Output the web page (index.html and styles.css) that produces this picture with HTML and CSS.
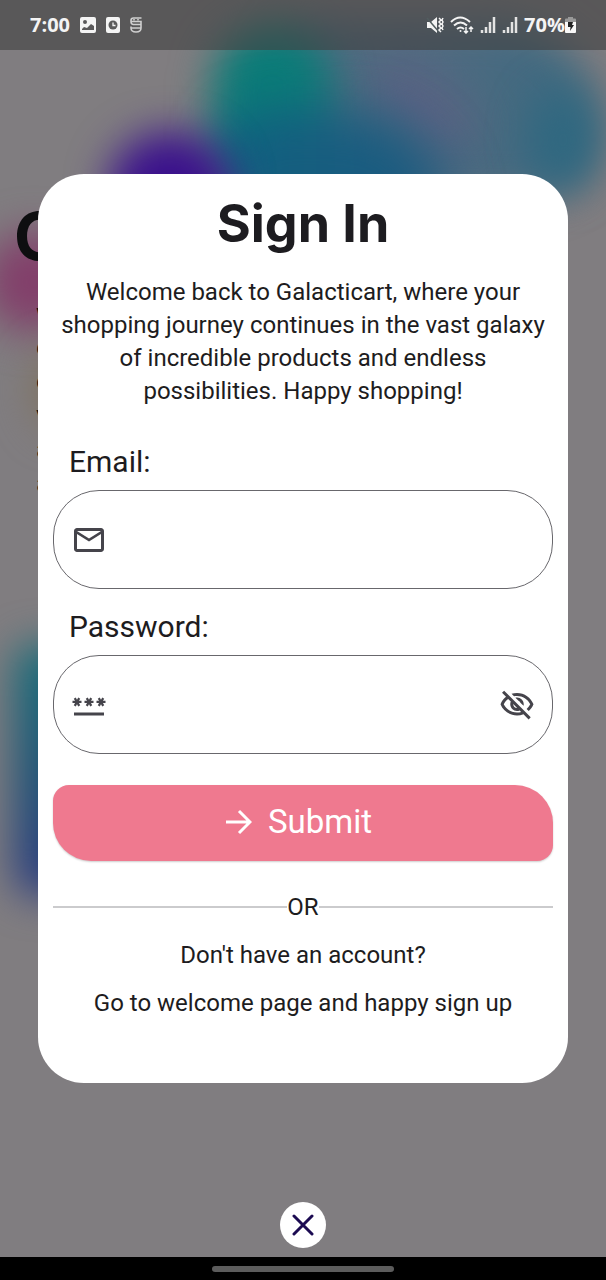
FILE: index.html
```html
<!DOCTYPE html>
<html lang="en">
<head>
<meta charset="utf-8">
<meta name="viewport" content="width=device-width, initial-scale=1">
<title>Sign In</title>
<link rel="stylesheet" href="styles.css">
</head>
<body>
<div class="screen">
  <div class="backdrop" aria-hidden="true">
    <div class="art">
      <i class="blob sky"></i>
      <i class="blob mauve"></i>
      <i class="blob lagoon"></i>
      <i class="blob teal"></i>
      <i class="blob blue"></i>
      <i class="blob violet"></i>
      <i class="blob pink"></i>
      <i class="blob sand"></i>
      <i class="blob panel"></i>
    </div>
    <div class="hero">
      <div class="hero-title">G</div>
      <div class="hero-text">w<br>e<br>o<br>v<br>a<br>a</div>
    </div>
  </div>

  <header class="status">
    <div class="status-group left">
      <span class="clock">7:00</span>
      <svg width="16" height="16" viewBox="0 0 16 16"><path fill="#f4f4f4" fill-rule="evenodd" d="M2 0h12a2 2 0 0 1 2 2v12a2 2 0 0 1-2 2H2a2 2 0 0 1-2-2V2a2 2 0 0 1 2-2zm3 3a2 2 0 1 0 0 4 2 2 0 0 0 0-4zM2 13h12V9l-3-2-4 4-3-1-2 2z"/></svg>
      <svg width="14" height="16" viewBox="0 0 14 16"><rect width="14" height="16" rx="2" fill="#f4f4f4"/><circle cx="7" cy="8" r="4.500" fill="#5c5c5c"/><path d="M7 5.500v3h2.500" fill="none" stroke="#f4f4f4" stroke-width="1.300"/></svg>
      <svg width="12" height="16" viewBox="0 0 12 16" fill="none" stroke="#cfcfcf" stroke-width="1.600"><path d="M11.500 1H3.500Q1 1 1 3.500v1Q1 7.500 3.500 7.500H11V11q0 4-5 4t-5-4V9.500M1.500 4.500H11V7M1.500 11H11"/><path d="M4 2v1.500M8 2v1.500"/></svg>
    </div>
    <div class="status-group">
      <svg width="18" height="18" viewBox="0 0 18 18"><path fill="#f4f4f4" d="M1 6h4l6-5v16l-6-5H1z"/><path d="M1 2l12 14" stroke="#525d5f" stroke-width="1.500"/><path d="M13 2l2 2-2 2 2 2-2 2 2 2-2 2 2 2M17 2l-1 2 1 2-1 2 1 2-1 2 1 2" fill="none" stroke="#f4f4f4" stroke-width="1.500"/></svg>
      <svg class="wifi" width="24" height="18" viewBox="0 0 24 18" fill="none" stroke="#f4f4f4" stroke-width="2"><path d="M1 6q9-9 19 0M4 9.500q6.500-6 13 0M7 13q3.500-3 7 0"/><circle cx="10.500" cy="15" r="1" fill="#f4f4f4" stroke="none"/><path stroke-width="1.500" d="M16 11v6M14 15l2 2 2-2M21 16v-5M19 13l2-2 2 2"/></svg>
      <svg width="16" height="16" viewBox="0 0 16 16" fill="none" stroke="#e4e4e4" stroke-width="2.500"><path d="M2 16v-3M6 16v-6M10 16V5M14 16V0"/></svg>
      <svg width="16" height="16" viewBox="0 0 16 16" fill="none" stroke="#e4e4e4" stroke-width="2.500"><path d="M2 16v-3M6 16v-6M10 16V5M14 16V0"/></svg>
      <span class="charge"><span class="clock">70%</span><svg width="11" height="16" viewBox="0 0 11 16"><path fill="#999" d="M3 0h5v1.500h2q1 0 1 1V6H0V2.500q0-1 1-1h2z"/><path fill="#f8f8f8" d="M0 5h11v10q0 1-1 1H1q-1 0-1-1z"/><path fill="#222" d="M3 5h5l-1 3h2l-4 6 .5-4H3z"/></svg></span>
    </div>
  </header>

  <main class="content">
    <section class="dialog" role="dialog" aria-labelledby="title">
      <h1 class="title" id="title">Sign In</h1>
      <p class="intro">Welcome back to Galacticart, where your<br>shopping journey continues in the vast galaxy<br>of incredible products and endless<br>possibilities. Happy shopping!</p>
      <form class="form">
        <label class="label" for="email">Email:</label>
        <div class="field">
          <svg class="icon" viewBox="0 0 24 24"><path d="M22 6c0-1.100-.9-2-2-2H4c-1.100 0-2 .9-2 2v12c0 1.100.9 2 2 2h16c1.100 0 2-.9 2-2V6zm-2 0l-8 5-8-5h16zm0 12H4V8l8 5 8-5v10z"/></svg>
          <input class="input" id="email" type="email">
        </div>
        <label class="label" for="password">Password:</label>
        <div class="field">
          <svg class="icon" viewBox="0 0 24 24"><path d="M2 17h20v2H2v-2zm1.150-4.050L4 11.470l.85 1.480 1.300-.75-.85-1.480H7v-1.500H5.300l.85-1.470L4.850 7 4 8.470 3.150 7l-1.300.75.85 1.470H1v1.500h1.700l-.85 1.480 1.300.75zm6.700-.75l1.300.75.85-1.480.85 1.480 1.300-.75-.85-1.480H15v-1.500h-1.700l.85-1.470-1.300-.75L12 8.470 11.150 7l-1.300.75.85 1.470H9v1.500h1.700l-.85 1.480zM23 9.220h-1.700l.85-1.470-1.300-.75L20 8.470 19.150 7l-1.300.75.85 1.470H17v1.500h1.700l-.85 1.480 1.300.75.85-1.480.85 1.480 1.300-.75-.85-1.480H23v-1.500z"/></svg>
          <input class="input" id="password" type="password">
          <button class="reveal" type="button" aria-label="Show password"><svg class="icon" viewBox="0 0 24 24"><path d="M12 6c3.790 0 7.170 2.130 8.820 5.500-.59 1.220-1.420 2.270-2.410 3.120l1.410 1.410c1.390-1.230 2.490-2.770 3.180-4.530C21.270 7.110 17 4 12 4c-1.270 0-2.490.2-3.640.57l1.650 1.650C10.660 6.090 11.320 6 12 6zm-1.070 1.140L13 9.210c.57.25 1.030.71 1.280 1.280l2.070 2.070c.08-.34.14-.7.14-1.070C16.500 9.010 14.480 7 12 7c-.37 0-.72.05-1.070.14zM2.010 3.870l2.680 2.680C3.060 7.830 1.770 9.530 1 11.500 2.730 15.890 7 19 12 19c1.520 0 2.980-.29 4.320-.82l3.420 3.420 1.410-1.410L3.420 2.450 2.010 3.870zm7.500 7.500l2.610 2.610c-.04.01-.08.02-.12.02-1.380 0-2.500-1.120-2.500-2.500 0-.05.01-.08.01-.13zm-3.400-3.400l1.750 1.750c-.23.55-.36 1.150-.36 1.780 0 2.480 2.020 4.500 4.500 4.500.63 0 1.230-.13 1.770-.36l.98.98c-.88.24-1.800.38-2.750.38-3.790 0-7.170-2.130-8.820-5.500.7-1.430 1.720-2.610 2.930-3.530z"/></svg></button>
        </div>
        <button class="submit" type="submit">
          <svg width="26" height="26" viewBox="0 0 26 26" fill="none" stroke="#fff" stroke-width="3"><path d="M0 13h24M13 2l11 11-11 11"/></svg>
          <span>Submit</span>
        </button>
      </form>
      <div class="divider"><span>OR</span></div>
      <p class="note">Don't have an account?</p>
      <p class="note">Go to welcome page and happy sign up</p>
    </section>
    <button class="close" type="button" aria-label="Close"><svg width="22" height="22" viewBox="0 0 22 22" fill="none" stroke="#1c0b52" stroke-width="3" stroke-linecap="round"><path d="M2 2l18 18M20 2L2 20"/></svg></button>
  </main>

  <footer class="nav"><span class="handle"></span></footer>
</div>
</body>
</html>
```

FILE: styles.css
```css
* { box-sizing: border-box; }

body {
  margin: 0;
  background: #807d80;
  color: #1d1c20;
  font-family: Roboto, "Liberation Sans", sans-serif;
}

.screen {
  position: relative;
  display: flex;
  flex-direction: column;
  min-height: 100vh;
  overflow: hidden;
}

/* Dimmed page behind the dialog */
.backdrop {
  position: absolute;
  inset: 0;
  overflow: hidden;
}

.blob {
  position: absolute;
  border-radius: 50%;
  filter: blur(20px);
}

.sky { left: 270px; top: 20px; width: 330px; height: 180px; border-radius: 60px 120px 80px 60px; background: linear-gradient(90deg, #4f6c80, #4f6a80 50%, #3a6a80); }
.mauve { left: 360px; top: 76px; width: 120px; height: 60px; background: #5a6283; transform: rotate(35deg); }
.lagoon { left: 530px; top: 90px; width: 66px; height: 100px; background: #2f6880; }
.teal { left: 212px; top: 24px; width: 120px; height: 170px; border-radius: 60px; background: linear-gradient(#0a7c78 50%, #08687f); }
.blue { left: 220px; top: 112px; width: 230px; height: 150px; border-radius: 60px 120px 60px 60px; background: linear-gradient(90deg, #10607f, #1f5a80); filter: blur(26px); }
.violet { left: 108px; top: 132px; width: 124px; height: 120px; background: #3a108c; }
.pink { left: -16px; top: 232px; width: 100px; height: 100px; background: #823f6a; }
.sand { left: 34px; top: 350px; width: 60px; height: 80px; background: #80725c; }
.panel { left: 14px; top: 645px; width: 120px; height: 250px; border-radius: 20px; background: linear-gradient(#17707a, #1f5577 50%, #2c3a80); }

.hero {
  position: relative;
  display: flex;
  flex-direction: column;
  gap: 28px;
  padding: 204px 0 0 14px;
}

.hero-title {
  font: 700 66px/64px Inter, sans-serif;
  color: #0e0e10;
}

.hero-text {
  padding-left: 22px;
  font-size: 26px;
  line-height: 34px;
  color: #0e0e10;
}

.status {
  position: relative;
  display: flex;
  align-items: center;
  justify-content: space-between;
  height: 50px;
  padding: 0 30px;
  background: rgba(64, 64, 64, .6);
}

.status-group {
  display: flex;
  align-items: center;
  gap: 6px;
}

.left { gap: 10px; }

.clock {
  font: 700 20px/24px "Open Sans", sans-serif;
  color: #f4f4f4;
}

.charge {
  display: flex;
  align-items: center;
}

.content {
  position: relative;
  flex: 1;
  display: flex;
  flex-direction: column;
  align-items: center;
  padding: 124px 38px 9px;
}

.dialog {
  width: 100%;
  padding: 20px 15px 64px;
  border-radius: 46px;
  background: #fff;
}

.title {
  margin: 0;
  font: 700 52px/60px Inter, sans-serif;
  text-align: center;
}

.intro {
  margin: 22px 0 26px;
  font-size: 24px;
  line-height: 33px;
  text-align: center;
}

.form {
  display: flex;
  flex-direction: column;
}

.label {
  padding: 8px 16px;
  font-size: 30px;
  line-height: 40px;
}

.field {
  display: flex;
  align-items: center;
  gap: 12px;
  height: 99px;
  margin-bottom: 10px;
  padding: 0 17px;
  border: 1px solid #68676c;
  border-radius: 46px;
}

.icon {
  flex: none;
  display: block;
  width: 36px;
  height: 36px;
  fill: #45444b;
}

.input {
  flex: 1;
  min-width: 0;
  height: 60px;
  padding: 0;
  border: 0;
  outline: 0;
  background: none;
  font: inherit;
  font-size: 24px;
}

.reveal {
  padding: 0;
  border: 0;
  background: none;
}

.submit {
  display: flex;
  align-items: center;
  justify-content: center;
  gap: 16px;
  height: 76px;
  margin-top: 21px;
  padding: 0 8px 2px 0;
  border: 0;
  border-radius: 16px 38px 16px 38px;
  background: #ef798f;
  box-shadow: 0 1px 2px rgba(0, 0, 0, .2);
  color: #fff;
  font: 400 33px/40px Roboto, sans-serif;
}

.divider {
  display: flex;
  align-items: center;
  margin: 30px 0 16px;
  font-size: 24px;
  line-height: 32px;
}

.divider::before,
.divider::after {
  content: "";
  flex: 1;
  height: 2px;
  background: #cbcbcd;
}

.note {
  margin: 0 0 16px;
  font-size: 24px;
  line-height: 32px;
  text-align: center;
}

.note:last-child { margin: 0; }

.close {
  display: flex;
  align-items: center;
  justify-content: center;
  width: 46px;
  height: 46px;
  margin-top: auto;
  padding: 0;
  border: 0;
  border-radius: 50%;
  background: #fff;
}

.nav {
  position: relative;
  display: flex;
  align-items: center;
  justify-content: center;
  height: 23px;
  background: #000;
}

.handle {
  width: 30%;
  height: 6px;
  border-radius: 3px;
  background: #5c5c5c;
}
```
